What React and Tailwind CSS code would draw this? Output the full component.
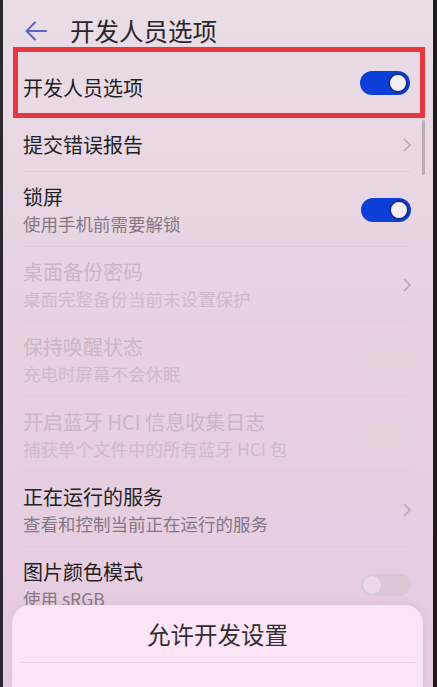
import React from "react";

const font = { fontFamily: '"Noto Sans CJK SC", "Noto Sans", sans-serif' };

function Toggle({ on, faint }) {
  if (on) {
    return (
      <div className="w-[50px] h-[24px] rounded-full bg-[#0b3fd8] flex items-center justify-end pr-[2px]">
        <div className="w-[20px] h-[20px] rounded-full bg-[#f4eef6] border-[2px] border-[#1b2f8a]" />
      </div>
    );
  }
  if (faint) {
    return <div className="w-[50px] h-[22px] rounded-full bg-[#e4d2df]" />;
  }
  return (
    <div className="w-[50px] h-[22px] rounded-full bg-[#dbc6d6] flex items-center pl-[2px]">
      <div className="w-[18px] h-[18px] rounded-full bg-[#e9d8e5]" />
    </div>
  );
}

function Chevron() {
  return (
    <svg width="10" height="14" viewBox="0 0 10 14" className="mr-[-1px]">
      <polyline points="2,1 8,7 2,13" fill="none" stroke="#b7a5b4" strokeWidth="1.6" />
    </svg>
  );
}

function Item({ title, sub, right, disabled }) {
  return (
    <div className="h-[75px] mx-[23px] mr-[26px] flex items-center justify-between border-b border-[#dfcddb]">
      <div className="flex flex-col self-start pt-[11px]">
        <div className={`text-[20px] leading-[27px] ${disabled ? "text-[#c9b6c6]" : "text-[#231f23]"}`}>{title}</div>
        <div className={`text-[17.5px] leading-[25px] mt-[1px] ${disabled ? "text-[#cdbbca]" : "text-[#837883]"}`}>{sub}</div>
      </div>
      <div className="pt-[2px]">{right}</div>
    </div>
  );
}

export default function App() {
  return (
    <div
      className="relative w-[437px] h-[687px] overflow-hidden bg-gradient-to-b from-[#e9dde6] via-[#e7d1e1] to-[#e6cbe1]"
      style={font}
    >
      {/* header */}
      <div className="h-[47px] pt-[15px] flex items-center pl-[25px]">
        <svg width="22" height="20" viewBox="0 0 22 20">
          <path d="M21 10H2M10 1.5L1.5 10L10 18.5" fill="none" stroke="#5b63c9" strokeWidth="2" strokeLinecap="round" strokeLinejoin="round" />
        </svg>
        <div className="ml-[23px] text-[24.5px] leading-[32px] text-[#2a2629]">开发人员选项</div>
      </div>

      {/* highlighted row */}
      <div className="ml-[13px] mr-[12px] h-[71px] border-[5px] border-[#e8363d] flex items-center justify-between pl-[5px] pr-[10px]">
        <div className="text-[20px] leading-[27px] text-[#231f23] pt-[9px]">开发人员选项</div>
        <Toggle on />
      </div>

      <div className="h-[54px] mx-[23px] mr-[26px] flex items-center justify-between border-b border-[#e0cedb]">
        <div className="text-[20px] leading-[27px] text-[#231f23]">提交错误报告</div>
        <Chevron />
      </div>

      <Item title="锁屏" sub="使用手机前需要解锁" right={<Toggle on />} />
      <Item title="桌面备份密码" sub="桌面完整备份当前未设置保护" right={<Chevron />} disabled />
      <Item title="保持唤醒状态" sub="充电时屏幕不会休眠" right={<Toggle faint />} disabled />
      <Item title="开启蓝牙 HCI 信息收集日志" sub="捕获单个文件中的所有蓝牙 HCI 包" right={<Toggle faint />} disabled />
      <Item title="正在运行的服务" sub="查看和控制当前正在运行的服务" right={<Chevron />} />
      <Item title="图片颜色模式" sub="使用 sRGB" right={<Toggle />} />

      {/* scrollbar */}
      <div className="absolute right-[12px] top-[120px] w-[3px] h-[55px] rounded-full bg-[#b9abb7]" />

      {/* bottom sheet */}
      <div className="absolute left-[12px] right-[14px] top-[605px] bottom-0 rounded-t-[18px] bg-[#fae4f6] shadow-[0_-2px_6px_rgba(150,100,140,0.12)]">
        <div className="h-[57px] flex items-center justify-center text-[23.5px] text-[#332e32] pt-[2px]">允许开发设置</div>
        <div className="mx-[8px] border-t border-[#e9d2e3]" />
      </div>

      {/* phone frame edges */}
      <div className="absolute left-0 top-0 bottom-0 w-[3px] bg-[#2b2630]" />
      <div className="absolute right-0 top-0 bottom-0 w-[4px] bg-[#1d1a22]" />
    </div>
  );
}
